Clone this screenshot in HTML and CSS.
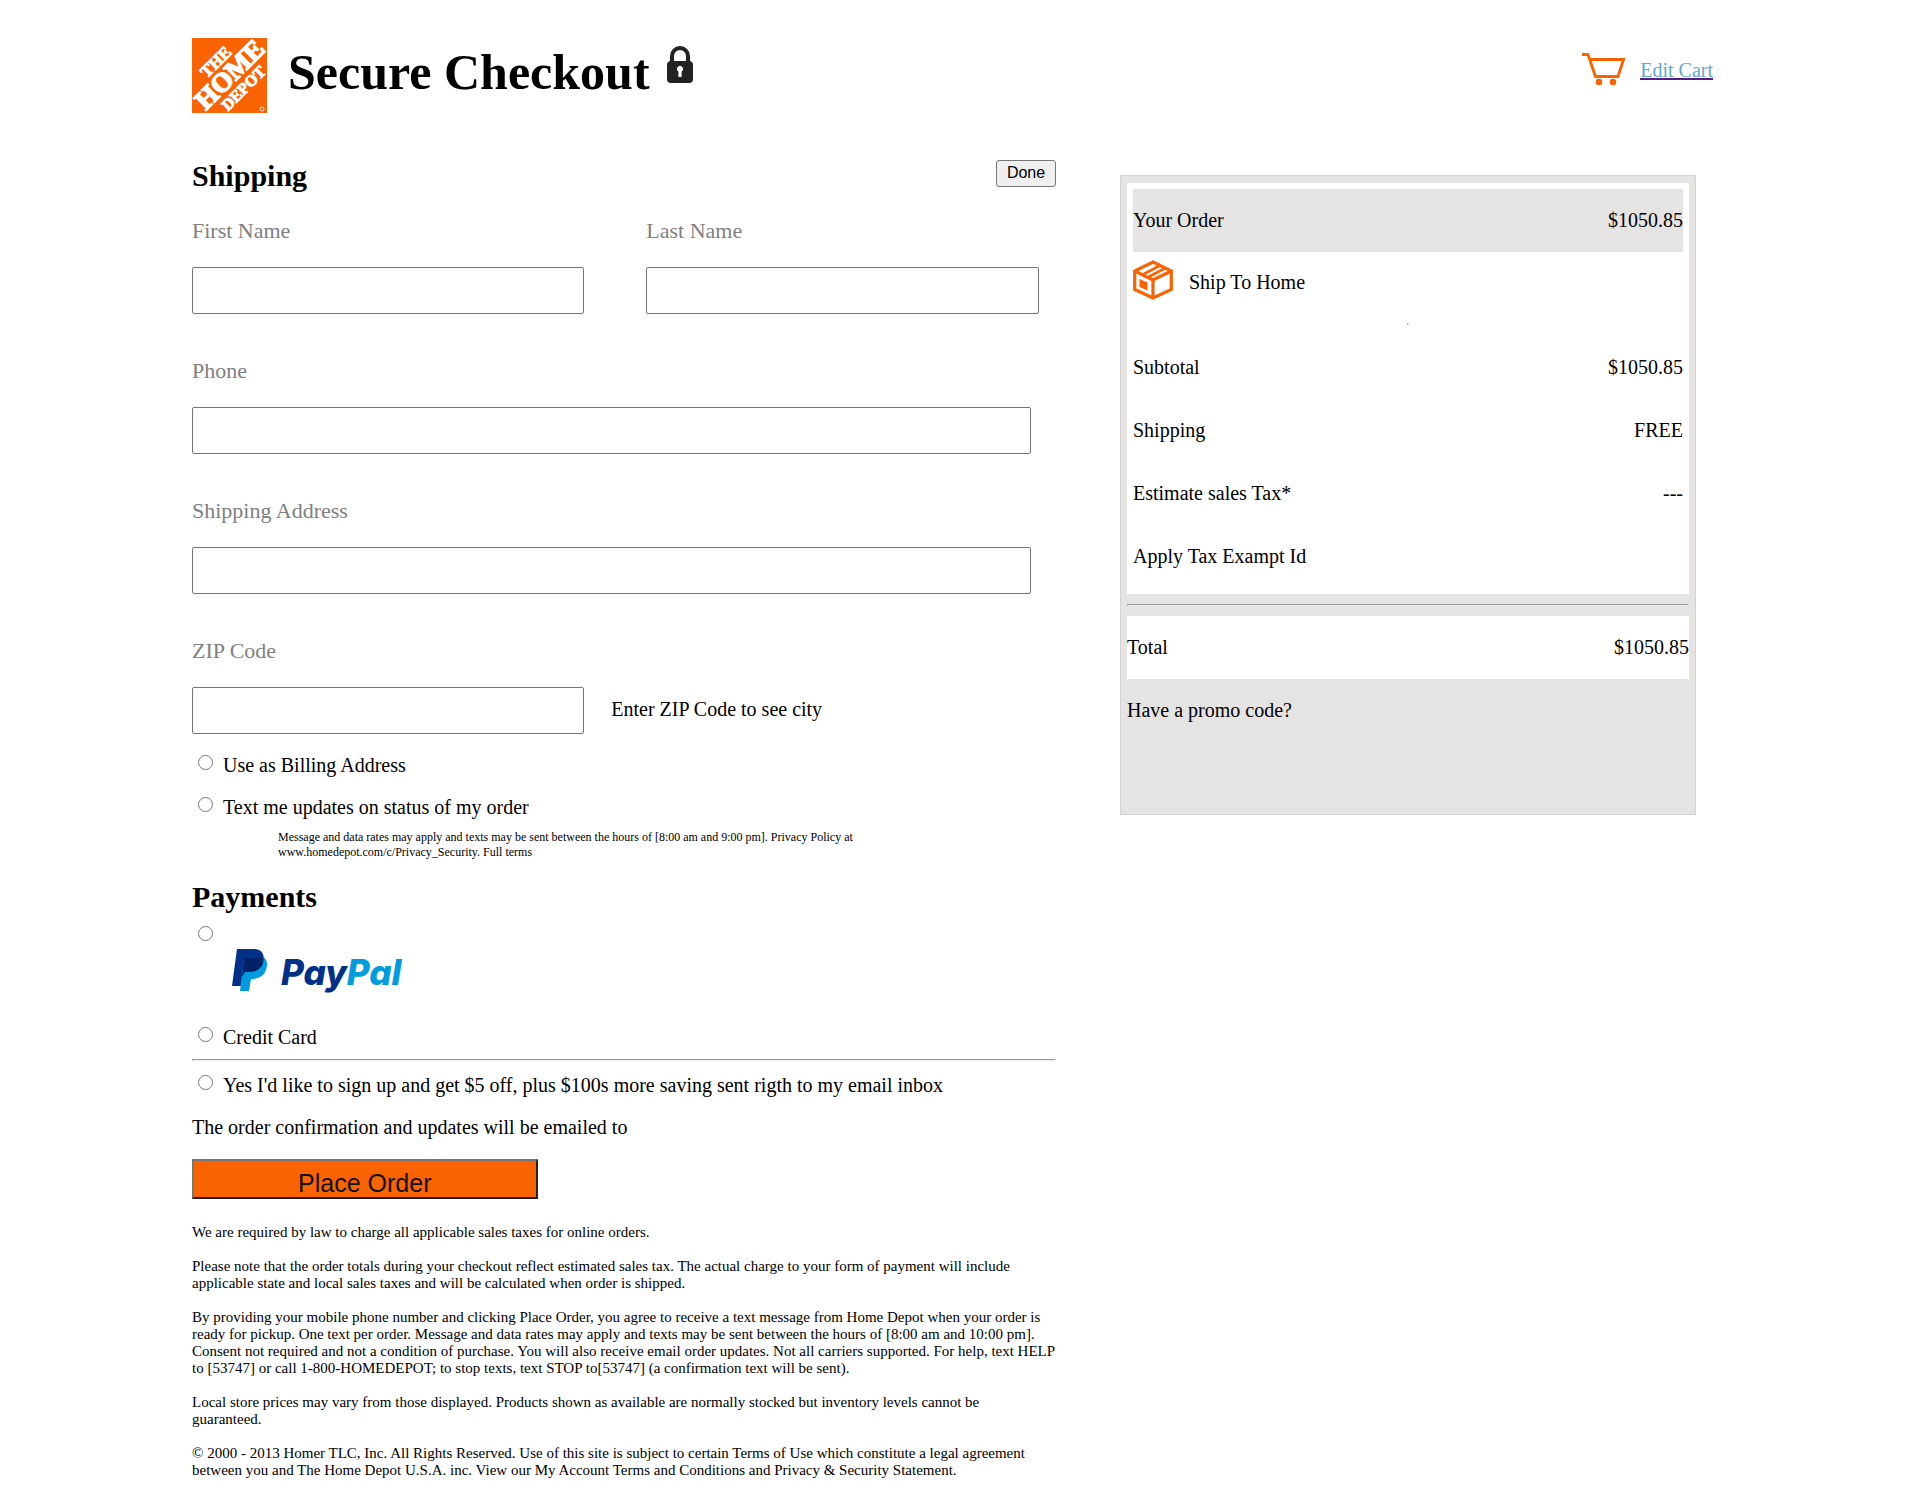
FILE: index.html
```html
<!DOCTYPE html>
<html lang="en">
<head>
<meta charset="utf-8">
<title>Secure Checkout</title>
<link rel="stylesheet" href="styles.css">
</head>
<body>
<div class="page">
  <header class="header">
    <svg class="logo" viewBox="0 0 75 75" role="img" aria-label="The Home Depot">
      <rect width="75" height="75" fill="#f96302"/>
      <g class="logo-text" transform="rotate(-45 37 37)">
        <text x="37" y="24" font-size="17">THE</text>
        <text x="38" y="46" font-size="27" stroke-width="1.600">HOME</text>
        <text x="38" y="62" font-size="16">DEPOT</text>
      </g>
      <circle cx="70" cy="71" r="2" fill="none" stroke="#fff" stroke-width=".9"/>
    </svg>
    <h1 class="title">Secure Checkout</h1>
    <svg class="lock" viewBox="0 0 26 37" aria-hidden="true">
      <path d="M5 18V10a8 8 0 0 1 16 0v8" fill="none" stroke="#222" stroke-width="4"/>
      <rect x="0" y="15" width="26" height="22" rx="4" fill="#222"/>
      <path d="M13 20a3 3 0 0 1 1.600 5.600V31h-3.200v-5.400A3 3 0 0 1 13 20z" fill="#fff"/>
    </svg>
    <a class="cart" href="#cart">
      <svg class="cart-icon" viewBox="0 0 43 33" aria-hidden="true">
        <path d="M0 1.500h6l7.500 22H36l5.500-17H8" fill="none" stroke="#f96302" stroke-width="2.800"/>
        <circle cx="17" cy="29" r="3.300" fill="#f96302"/>
        <circle cx="31" cy="29" r="3.300" fill="#f96302"/>
      </svg>
      <span class="cart-label">Edit Cart</span>
    </a>
  </header>

  <main class="main">
    <form class="checkout">
      <div class="section-head">
        <h2>Shipping</h2>
        <button class="done" type="button">Done</button>
      </div>
      <div class="names">
        <div class="field">
          <label for="first">First Name</label>
          <input id="first" type="text">
        </div>
        <div class="field">
          <label for="last">Last Name</label>
          <input id="last" type="text">
        </div>
      </div>
      <div class="field field-wide">
        <label for="phone">Phone</label>
        <input id="phone" type="tel">
      </div>
      <div class="field field-wide">
        <label for="address">Shipping Address</label>
        <input id="address" type="text">
      </div>
      <div class="zip">
        <div class="field">
          <label for="zip">ZIP Code</label>
          <input id="zip" type="text">
        </div>
        <p class="zip-hint">Enter ZIP Code to see city</p>
      </div>
      <label class="choice"><input type="radio" name="billing">Use as Billing Address</label>
      <label class="choice"><input type="radio" name="updates">Text me updates on status of my order</label>
      <p class="note">Message and data rates may apply and texts may be sent between the hours of [8:00 am and 9:00 pm]. Privacy Policy at www.homedepot.com/c/Privacy_Security. Full terms</p>

      <h2 class="payments">Payments</h2>
      <label class="choice choice-paypal"><input type="radio" name="paypal">
        <svg class="paypal" viewBox="0 0 190 72" role="img" aria-label="PayPal">
          <path d="M14 23H31C40 23 42 30 40 36C38 44 31 46 25 46H20L18 60H9z" fill="#003087"/>
          <path d="M21 32H41.500C45 35 44.500 40 42.500 45C40 51 34 53 28 53L26 65H17z" fill="#009cde"/>
          <path d="M21 32H40.500C40.800 41 35 46 26 46H22L19 51z" fill="#012169"/>
          <text class="wordmark" x="58" y="59" fill="#003087">Pay<tspan fill="#009cde">Pal</tspan></text>
        </svg>
      </label>
      <label class="choice choice-card"><input type="radio" name="card">Credit Card</label>
      <hr class="rule">
      <label class="choice choice-email"><input type="radio" name="signup">Yes I'd like to sign up and get $5 off, plus $100s more saving sent rigth to my email inbox</label>
      <p class="confirm">The order confirmation and updates will be emailed to</p>
      <button class="place" type="button">Place Order</button>

      <div class="legal">
        <p>We are required by law to charge all applicable sales taxes for online orders.</p>
        <p>Please note that the order totals during your checkout reflect estimated sales tax. The actual charge to your form of payment will include applicable state and local sales taxes and will be calculated when order is shipped.</p>
        <p>By providing your mobile phone number and clicking Place Order, you agree to receive a text message from Home Depot when your order is ready for pickup. One text per order. Message and data rates may apply and texts may be sent between the hours of [8:00 am and 10:00 pm]. Consent not required and not a condition of purchase. You will also receive email order updates. Not all carriers supported. For help, text HELP to [53747] or call 1-800-HOMEDEPOT; to stop texts, text STOP to[53747] (a confirmation text will be sent).</p>
        <p>Local store prices may vary from those displayed. Products shown as available are normally stocked but inventory levels cannot be<br>guaranteed.</p>
        <p>© 2000 - 2013 Homer TLC, Inc. All Rights Reserved. Use of this site is subject to certain Terms of Use which constitute a legal agreement between you and The Home Depot U.S.A. inc. View our My Account Terms and Conditions and Privacy &amp; Security Statement.</p>
      </div>
    </form>

    <aside class="summary">
      <div class="order">
        <div class="row row-head"><span>Your Order</span><span>$1050.85</span></div>
        <div class="ship">
          <svg class="box" viewBox="0 0 40 40" aria-hidden="true">
            <g fill="none" stroke="#f96302" stroke-width="3.200">
              <path d="M20 2L38.300 11V29.500L20 38L1.700 29.500V11z"/>
              <path d="M1.700 11L20 20L38.300 11M20 20V38"/>
              <path d="M9 15L27 5.500M14.500 17.500L32.500 8" stroke-width="2.600"/>
            </g>
            <path d="M6.500 19l8 3.500v8l-8-3.500z" fill="#f96302"/>
          </svg>
          <span class="ship-label">Ship To Home</span>
        </div>
        <div class="divider"><hr></div>
        <div class="row"><span>Subtotal</span><span>$1050.85</span></div>
        <div class="row"><span>Shipping</span><span>FREE</span></div>
        <div class="row"><span>Estimate sales Tax*</span><span>---</span></div>
        <div class="row"><span>Apply Tax Exampt Id</span></div>
      </div>
      <hr class="total-rule">
      <div class="row row-total"><span>Total</span><span>$1050.85</span></div>
      <div class="row"><span>Have a promo code?</span></div>
    </aside>
  </main>
</div>
</body>
</html>
```
FILE: styles.css
```css
* {
  box-sizing: border-box;
}

body {
  margin: 0;
  background: #fff;
  color: #000;
  font: 20px/23px "Liberation Serif", "Times New Roman", serif;
}

h1,
h2,
p {
  margin: 0;
}

.page {
  width: 80%;
  margin: 0 auto;
  padding: 38px 0 13px;
}

.header {
  display: flex;
  align-items: flex-start;
  padding-right: 15px;
}

.logo {
  width: 75px;
  height: 75px;
}

.logo-text {
  fill: #fff;
  stroke: #fff;
  stroke-width: 1;
  font-family: "Liberation Serif", serif;
  font-weight: bold;
  text-anchor: middle;
}

.title {
  margin: 5px 17px 0 21px;
  font-size: 50px;
  line-height: 58px;
}

.lock {
  width: 26px;
  height: 37px;
  margin-top: 8px;
}

.cart {
  display: flex;
  gap: 15px;
  margin: 15px 0 0 auto;
  color: #551a8b;
}

.cart-icon {
  width: 43px;
  height: 33px;
}

.cart-label {
  margin-top: 6px;
  color: #62a8cf;
  text-decoration: underline #551a8b;
}

.main {
  display: flex;
  align-items: flex-start;
  justify-content: space-between;
  margin-top: 46px;
}

.checkout {
  width: 56.25%;
}

h2 {
  font-size: 30px;
  line-height: 34px;
}

.section-head {
  display: flex;
  justify-content: space-between;
  align-items: flex-start;
  margin-bottom: 25px;
}

.done {
  width: 60px;
  height: 27px;
  margin-top: 1px;
  padding: 0 6px 2px;
  border: 1px solid #767676;
  border-radius: 3px;
  background: #efefef;
  color: #000;
  font: 16px "Liberation Sans", Arial, sans-serif;
}

.names {
  display: flex;
  gap: 62px;
}

.field {
  display: flex;
  flex-direction: column;
  gap: 24px;
  width: 45.4%;
  margin-bottom: 44px;
}

.field-wide {
  width: 97.1%;
}

.field label {
  color: #808080;
  font-size: 22px;
  line-height: 25px;
}

.field input {
  width: 100%;
  height: 47px;
  padding: 1px 8px;
  border: 1px solid #767676;
  border-radius: 2px;
  font: inherit;
}

.zip {
  display: flex;
  align-items: flex-end;
  gap: 27px;
  margin-bottom: 20px;
}

.zip .field {
  margin-bottom: 0;
}

.zip-hint {
  padding-bottom: 13px;
}

.choice {
  display: flex;
  align-items: flex-start;
  margin-bottom: 19px;
}

.choice input {
  flex: none;
  width: 15px;
  height: 15px;
  margin: 1px 10px 0 6px;
}

.note {
  width: 610px;
  margin: -8px 0 20px 86px;
  font-size: 12px;
  line-height: 15px;
}

.choice-paypal {
  margin: 11px 0 28px;
}

.paypal {
  width: 190px;
  height: 72px;
  margin-top: 1px;
}

.wordmark {
  font: italic 800 35px Inter, sans-serif;
}

.choice-card {
  margin-bottom: 10px;
}

.rule {
  margin: 0 0 13px;
}

.confirm {
  margin-bottom: 20px;
}

.place {
  display: block;
  width: 40%;
  height: 40px;
  padding: 8px 6px 0;
  border: 2px solid;
  border-color: #767676 #222 #222 #767676;
  background: #f96302;
  color: #111;
  font: 25px/28px "Liberation Sans", Arial, sans-serif;
}

.legal {
  display: grid;
  gap: 17px;
  margin-top: 25px;
  font-size: 15px;
  line-height: 17px;
}

.summary {
  width: 37.5%;
  min-height: 640px;
  margin: 16px 32px 0 0;
  padding: 7px 6px;
  border: 1px solid #d3d3d3;
  background: #e5e4e2;
}

.order {
  padding: 6px;
  background: #fff;
}

.row {
  display: flex;
  justify-content: space-between;
  padding: 20px 0;
}

.row-head {
  background: #e5e4e2;
}

.row-total {
  background: #fff;
}

.ship {
  display: flex;
  gap: 16px;
  padding-top: 8px;
}

.ship-label {
  margin-top: 11px;
}

.box {
  width: 40px;
  height: 40px;
}

.divider {
  display: flex;
  padding: 23px 0 11px;
}

.divider hr {
  margin: 0 auto;
}

.total-rule {
  margin: 10px 0;
}
```
